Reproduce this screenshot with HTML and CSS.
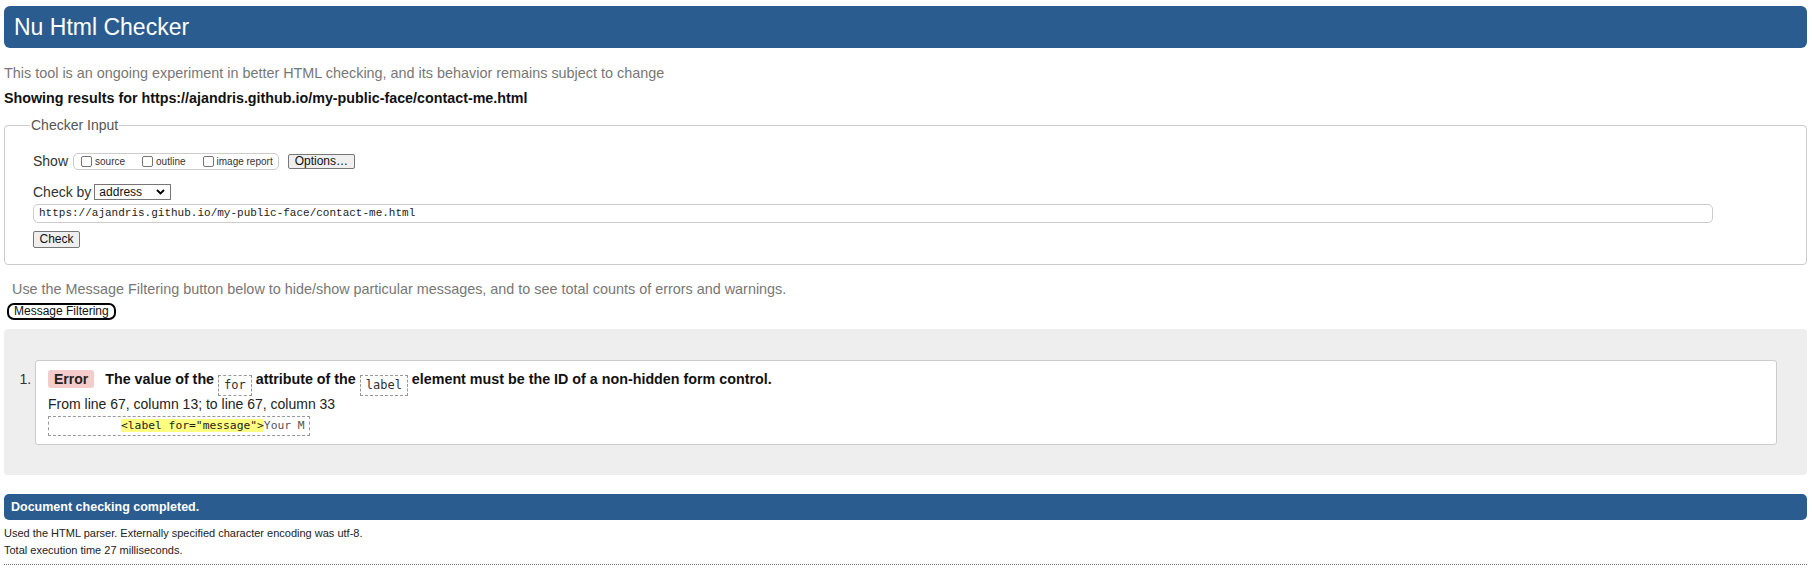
FILE: index.html
```html
<!DOCTYPE html>
<html lang="en">
<head>
<meta charset="utf-8">
<title>Showing results for contact-me.html - Nu Html Checker</title>
<link rel="stylesheet" href="styles.css">
</head>
<body>
<h1 class="title">Nu Html Checker</h1>
<p class="intro">This tool is an ongoing experiment in better HTML checking, and its behavior remains subject to change</p>
<p class="showing">Showing results for https://ajandris.github.io/my-public-face/contact-me.html</p>

<fieldset class="checker">
  <legend class="legend">Checker Input</legend>
  <div class="row-show">
    <span class="lbl">Show</span>
    <span class="show-box">
      <label class="opt"><span class="cb"></span>source</label>
      <label class="opt"><span class="cb"></span>outline</label>
      <label class="opt"><span class="cb"></span>image report</label>
    </span>
    <button class="btn btn-options" type="button">Options…</button>
  </div>
  <div class="row-by">
    <span class="lbl">Check by</span>
    <span class="select">address
      <svg class="chev" width="9" height="6" viewBox="0 0 9 6"><path d="M1 1 L4.5 4.5 L8 1" fill="none" stroke="#000" stroke-width="1.8"/></svg>
    </span>
  </div>
  <div class="url">https://ajandris.github.io/my-public-face/contact-me.html</div>
  <button class="btn btn-check" type="button">Check</button>
</fieldset>

<p class="filter-note">Use the Message Filtering button below to hide/show particular messages, and to see total counts of errors and warnings.</p>
<button class="btn-filter" type="button">Message Filtering</button>

<div class="results">
  <ol class="msgs">
    <li class="msg">
      <p class="msg-line"><span class="badge">Error</span><strong class="msg-text">The value of the <code class="cd">for</code> attribute of the <code class="cd">label</code> element must be the ID of a non-hidden form control.</strong></p>
      <p class="loc">From line 67, column 13; to line 67, column 33</p>
      <p class="extract-wrap"><code class="extract">          <b class="hl">&lt;label for="message"&gt;</b>Your M</code></p>
    </li>
  </ol>
</div>

<h2 class="done">Document checking completed.</h2>
<p class="foot">Used the HTML parser. Externally specified character encoding was utf-8.</p>
<p class="foot foot2">Total execution time 27 milliseconds.</p>
<hr class="dots">
</body>
</html>
```
FILE: styles.css
```css
html, body { background: #fff; }
body {
  margin: 0 5px 0 4px;
  font-family: "Liberation Sans", Arial, sans-serif;
  color: #222;
}
.title {
  margin: 6px 0 0;
  height: 42px;
  line-height: 42px;
  padding-left: 10px;
  background: #2a5c8f;
  color: #fff;
  font-size: 23px;
  font-weight: normal;
  border-radius: 6px;
}
.intro {
  margin: 17px 0 0;
  font-size: 14.4px;
  line-height: 16px;
  color: #777;
}
.showing {
  margin: 10px 0 0;
  font-size: 14.3px;
  line-height: 15px;
  font-weight: bold;
  color: #111;
}
.checker {
  margin: 11px 0 0;
  padding: 19px 20px 16px 28px;
  border: 1px solid #ccc;
  border-radius: 4px;
  min-width: 0;
}
.legend {
  padding: 0 1px;
  margin-left: -3px;
  font-size: 14px;
  line-height: 16px;
  color: #555;
}
.lbl {
  font-size: 14px;
  color: #333;
}
.row-show {
  display: flex;
  align-items: center;
  height: 18px;
}
.show-box {
  display: inline-flex;
  align-items: center;
  gap: 17px;
  height: 17px;
  box-sizing: border-box;
  margin-left: 5px;
  padding: 0 5px 0 7px;
  border: 1px solid #ccc;
  border-radius: 5px;
}
.opt {
  display: inline-flex;
  align-items: center;
  font-size: 10px;
  color: #333;
}
.cb {
  width: 11px;
  height: 11px;
  box-sizing: border-box;
  border: 1px solid #767676;
  border-radius: 2px;
  background: #fff;
  margin-right: 3px;
}
.btn {
  font-family: "Liberation Sans", Arial, sans-serif;
  font-size: 12px;
  color: #111;
  background: #efefef;
  border: 1px solid #767676;
  border-radius: 2px;
  padding: 0 6px;
  box-sizing: border-box;
}
.btn-options {
  height: 15px;
  line-height: 13px;
  margin-left: 9px;
}
.row-by {
  display: flex;
  align-items: center;
  margin-top: 14px;
  height: 16px;
}
.select {
  display: inline-flex;
  align-items: center;
  justify-content: space-between;
  width: 77px;
  height: 16px;
  box-sizing: border-box;
  margin-left: 3px;
  padding: 0 5px 0 4px;
  border: 1px solid #767676;
  font-size: 12px;
  color: #111;
  background: #fff;
}
.url {
  margin-top: 4px;
  width: 1680px;
  height: 19px;
  box-sizing: border-box;
  border: 1px solid #ccc;
  border-radius: 5px;
  padding-left: 5px;
  font-family: "Liberation Mono", "DejaVu Sans Mono", monospace;
  font-size: 11px;
  line-height: 17px;
  color: #222;
}
.btn-check {
  display: block;
  margin-top: 8px;
  height: 17px;
  width: 47px;
  padding: 0;
  line-height: 15px;
}
.filter-note {
  margin: 16px 0 0;
  padding-left: 8px;
  font-size: 14.4px;
  line-height: 16px;
  color: #777;
}
.btn-filter {
  display: block;
  margin: 6px 0 0 3px;
  height: 17px;
  box-sizing: border-box;
  padding: 0 5px;
  border: 2px solid #000;
  border-radius: 7px;
  background: #fff;
  font-family: "Liberation Sans", Arial, sans-serif;
  font-size: 12px;
  line-height: 13px;
  color: #111;
}
.results {
  margin-top: 9px;
  background: #eee;
  border-radius: 4px;
  padding: 31px 30px 30px 31px;
}
.msgs {
  margin: 0;
  padding: 0;
  list-style: decimal outside;
}
.msg {
  background: #fff;
  border: 1px solid #ccc;
  border-radius: 3px;
  padding: 9px 12px 8px;
  font-size: 14px;
  color: #333;
}
.msg p { margin: 0; }
.msg-line {
  line-height: 18px;
  height: 18px;
}
.badge {
  display: inline-block;
  padding: 2px 6px;
  line-height: 14px;
  background: #f5cccc;
  border-radius: 3px;
  font-weight: bold;
  color: #222;
  margin-right: 11px;
}
.msg-text {
  color: #111;
  font-size: 14.3px;
}
.cd {
  display: inline-block;
  font-family: "DejaVu Sans Mono", monospace;
  font-size: 12px;
  font-weight: normal;
  line-height: 19px;
  padding: 0 5px;
  border: 1px dashed #999;
  color: #333;
  vertical-align: -5px;
}
.loc {
  margin-top: 8px !important;
  font-size: 14px;
  line-height: 16px;
  color: #222;
}
.extract-wrap {
  margin-top: 4px !important;
  height: 20px;
}
.extract {
  display: inline-block;
  box-sizing: border-box;
  height: 20px;
  padding: 0 4px 0 4px;
  border: 1px dashed #999;
  font-family: "DejaVu Sans Mono", monospace;
  font-size: 11.3px;
  line-height: 18px;
  white-space: pre;
  color: #555;
}
.hl {
  font-weight: normal;
  background: #ffff80;
  color: #222;
}
.done {
  margin: 19px 0 0;
  height: 26px;
  line-height: 26px;
  padding-left: 7px;
  background: #2a5c8f;
  color: #fff;
  font-size: 12.5px;
  font-weight: bold;
  border-radius: 5px;
}
.foot {
  margin: 6px 0 0;
  font-size: 11px;
  line-height: 15px;
  color: #222;
}
.foot2 { margin-top: 2px; }
.dots {
  margin: 6px 0 0;
  border: 0;
  border-top: 1px dotted #777;
  height: 0;
}
```
